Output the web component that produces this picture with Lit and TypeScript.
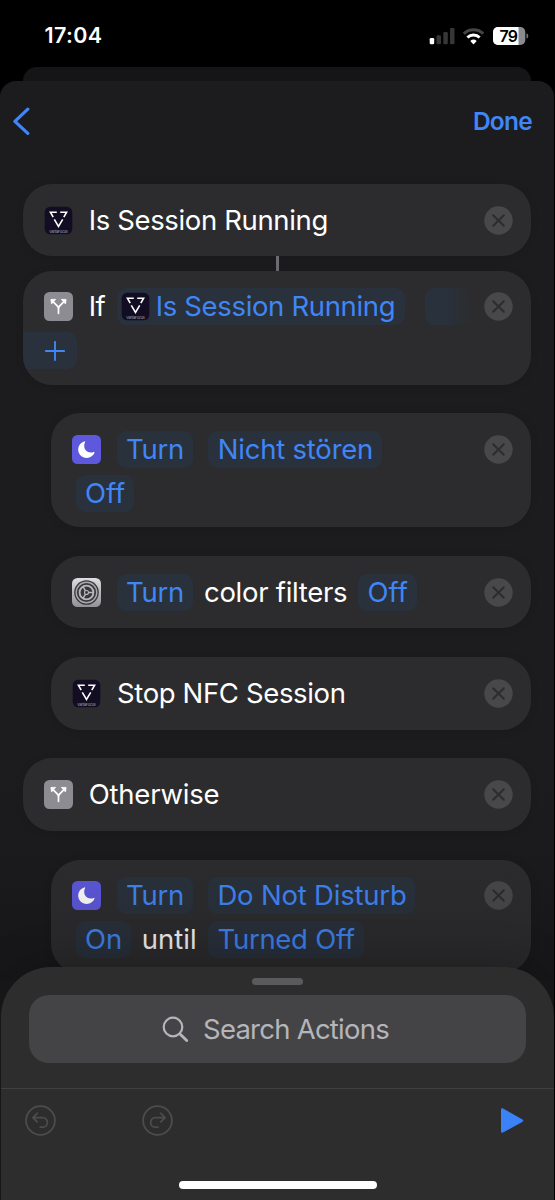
import { LitElement, html, svg, css, nothing } from "lit";
import { customElement, property } from "lit/decorators.js";
import { classMap } from "lit/directives/class-map.js";
import { styleMap } from "lit/directives/style-map.js";

type IconName = "vanta" | "branch" | "moon" | "settings";
type Token = {
  kind: "text" | "chip" | "fade" | "plus";
  text?: string;
  width: number;
  gap?: number;
  icon?: IconName;
  track?: number;
};
type Action = { icon: IconName; nested?: boolean; rows: Token[][]; linked?: boolean };

const spokes = [0, 120, 240];

const icons: Record<IconName, unknown> = {
  vanta: svg`
    <rect x="0.7" y="0.7" width="27.6" height="27.6" rx="5.5" fill="#130d24"/>
    <g fill="none" stroke="#fff" stroke-width="1.6">
      <path d="M12.800 6.200H6.400l2.800 5"/><path d="M16.200 6.200h6.400l-2.800 5"/>
      <path d="M10.300 13.400l4.200 7 4.200-7"/>
    </g>
    <text x="14.5" y="26.600" text-anchor="middle" font-size="3.7" textLength="18.5" letter-spacing="0" fill="#aaa7b4" font-family="Inter, sans-serif">VantaFocus</text>`,
  branch: svg`
    <rect width="29" height="29" rx="5.5" fill="#8d8c92"/>
    <path d="M14.5 21.3v-4.5c0-1.5-.5-2.2-1.5-3.2L9 9.7M14.5 16.8c0-1.5.5-2.2 1.5-3.2l4-3.9" fill="none" stroke="#fff" stroke-width="1.7" stroke-linecap="round"/>
    <path d="M6.9 7.4h4.8l-4.200 4.500zM22.1 7.4h-4.8l4.200 4.500z" fill="#fff" stroke="#fff" stroke-width=".8" stroke-linejoin="round"/>`,
  moon: svg`
    <rect width="29" height="29" rx="5.5" fill="#5d58dc"/>
    <path d="M12.4 6.4C8.500 7.500 6.200 10.900 6.200 14.400c0 4.700 3.700 8.500 8.500 8.500 3.700 0 6.700-2.100 7.800-5.300.2-.6-.2-.9-.7-.7-1 .4-2 .6-3 .6-4 0-6.600-2.800-6.600-6.700 0-1.300.3-2.600.9-3.700.3-.500-.1-.900-.7-.7z" fill="#fff"/>`,
  settings: svg`
    <defs><linearGradient id="metal" x1="0" y1="0" x2="0" y2="1"><stop stop-color="#dedee1"/><stop offset="1" stop-color="#919196"/></linearGradient></defs>
    <rect width="29" height="29" rx="5.500" fill="url(#metal)"/>
    <circle cx="14.500" cy="14.500" r="12.300" fill="#38383a"/>
    <circle cx="14.500" cy="14.500" r="10.300" fill="none" stroke="#a9a9ad" stroke-width="1.400"/>
    <circle cx="14.500" cy="14.500" r="6.900" fill="none" stroke="#b8b8bc" stroke-width="1.900"/>
    <circle cx="14.500" cy="14.500" r="2" fill="none" stroke="#b8b8bc" stroke-width="1.100"/>
    ${spokes.map((a) => svg`<path d="M16.500 14.500h5.500" stroke="#b8b8bc" stroke-width="1.500" transform="rotate(${a} 14.500 14.500)"/>`)}`,
};

const actions: Action[] = [
  { icon: "vanta", linked: true, rows: [[{ kind: "text", text: "Is Session Running", width: 241, track: -0.36 }]] },
  {
    icon: "branch",
    rows: [
      [
        { kind: "text", text: "If", width: 17, track: -0.5 },
        { kind: "chip", text: "Is Session Running", width: 288, gap: 11, icon: "vanta", track: -0.34 },
        { kind: "fade", width: 48, gap: 20 },
      ],
      [{ kind: "plus", width: 54 }],
    ],
  },
  {
    icon: "moon",
    nested: true,
    rows: [
      [
        { kind: "chip", text: "Turn", width: 76, track: -0.3 },
        { kind: "chip", text: "Nicht stören", width: 174, gap: 15.5, track: -0.22 },
      ],
      [{ kind: "chip", text: "Off", width: 58.5 }],
    ],
  },
  {
    icon: "settings",
    nested: true,
    rows: [
      [
        { kind: "chip", text: "Turn", width: 76, track: -0.3 },
        { kind: "text", text: "color filters", width: 143, gap: 11, track: -0.28 },
        { kind: "chip", text: "Off", width: 58.5, gap: 11.5 },
      ],
    ],
  },
  { icon: "vanta", nested: true, rows: [[{ kind: "text", text: "Stop NFC Session", width: 230, track: -0.36 }]] },
  { icon: "branch", rows: [[{ kind: "text", text: "Otherwise", width: 131, track: -0.22 }]] },
  {
    icon: "moon",
    nested: true,
    rows: [
      [
        { kind: "chip", text: "Turn", width: 76, track: -0.3 },
        { kind: "chip", text: "Do Not Disturb", width: 207, gap: 15.5, track: -0.2 },
      ],
      [
        { kind: "chip", text: "On", width: 55.5 },
        { kind: "text", text: "until", width: 55, gap: 10.5 },
        { kind: "chip", text: "Turned Off", width: 155.5, gap: 11.5, track: -0.28 },
      ],
    ],
  },
];

@customElement("action-icon")
export class ActionIcon extends LitElement {
  @property() name: IconName = "vanta";
  static styles = css`
    :host { display: block; flex: none; width: 29px; height: 29px; }
    svg { display: block; }
  `;
  render() {
    return html`<svg width="29" height="29" viewBox="0 0 29 29">${icons[this.name]}</svg>`;
  }
}

@customElement("action-card")
export class ActionCard extends LitElement {
  @property({ attribute: false }) action!: Action;
  static styles = css`
    :host { display: block; }
    .card {
      display: flex; flex-direction: column; gap: 7.2px; box-sizing: border-box;
      min-height: 72.400px; margin-left: 23px; padding: 17.400px 0 15.400px; border-radius: 29px;
      background: #2c2c2e; overflow: hidden; box-shadow: 0 1px 8px #0000001c;
    }
    .card.nested { margin-left: 51.300px; }
    .card.single { padding-top: 18.100px; padding-bottom: 17.500px; }
    .row { display: flex; align-items: center; height: 36.8px; }
    .lead { margin-left: 21.200px; margin-right: 15.500px; }
    .second { padding-left: 24.500px; }
    .second.bleed { padding-left: 0; }
    .token {
      display: flex; align-items: center; flex: none; box-sizing: border-box;
      height: 36.800px; white-space: nowrap; color: #fff;
    }
    .chip, .fade, .plus { background: #29313c; border-radius: 9px; color: #4086f6; }
    .chip { justify-content: center; }
    .chip.with-icon { justify-content: flex-start; padding-left: 4.500px; gap: 5.500px; }
    .fade { background: linear-gradient(90deg, #29313c 45%, #29313c00 95%); }
    .plus { justify-content: center; border-radius: 0 9px 9px 0; padding-left: 9px; }
    .remove { display: block; flex: none; margin-left: auto; margin-right: 18.500px; }
  `;
  private token(t: Token) {
    const style = { width: `${t.width}px`, marginLeft: `${t.gap ?? 0}px`, letterSpacing: `${t.track ?? 0}px` };
    return html`<span class=${classMap({ token: true, [t.kind]: true, "with-icon": !!t.icon })} style=${styleMap(style)}>
      ${t.icon ? html`<action-icon name=${t.icon}></action-icon>` : nothing}${t.text ? html`<span>${t.text}</span>` : nothing}${t.kind === "plus"
        ? html`<svg width="20" height="20" viewBox="0 0 20 20"><path d="M10 .9v18.200M.9 10h18.200" stroke="#4086f6" stroke-width="1.900" stroke-linecap="round"/></svg>`
        : nothing}
    </span>`;
  }
  render() {
    const a = this.action;
    return html`<div class=${classMap({ card: true, nested: !!a.nested, single: a.rows.length === 1 })}>
      <div class="row">
        <action-icon class="lead" name=${a.icon}></action-icon>
        ${a.rows[0].map((t) => this.token(t))}
        <svg class="remove" width="29" height="29" viewBox="0 0 29 29">
          <circle cx="14.500" cy="14.500" r="14.200" fill="#48484b"/>
          <path d="M9.200 9.200l10.600 10.600M19.800 9.200L9.200 19.800" stroke="#2c2c2e" stroke-width="2" stroke-linecap="round"/>
        </svg>
      </div>
      ${a.rows.slice(1).map((r) => html`<div class=${classMap({ row: true, second: true, bleed: r[0].kind === "plus" })}>${r.map((t) => this.token(t))}</div>`)}
    </div>`;
  }
}

@customElement("status-bar")
export class StatusBar extends LitElement {
  static styles = css`
    :host { display: flex; align-items: center; box-sizing: border-box; height: 67px; padding: 4px 26px 0 44.500px; color: #fff; }
    .time { font-size: 21.500px; font-weight: 600; letter-spacing: 0.350px; }
    .glyphs { display: block; margin-left: auto; }
  `;
  render() {
    return html`<span class="time">17:04</span>
      <svg class="glyphs" width="100" height="20" viewBox="429 25 100 20">
        <rect x="429.700" y="37" width="4.500" height="6.300" rx="1.300" fill="#fff"/>
        <g fill="#363638">
          <rect x="436.500" y="34.300" width="4.500" height="9" rx="1.300"/>
          <rect x="443.300" y="31" width="4.500" height="12.300" rx="1.300"/>
          <rect x="450" y="27" width="4.500" height="16.300" rx="1.300"/>
        </g>
        <path d="M463.800 32.700a14 14 0 0 1 19.400 0" fill="none" stroke="#454547" stroke-width="3"/>
        <path d="M467.400 36.500a8.800 8.800 0 0 1 12.200 0" fill="none" stroke="#fff" stroke-width="3"/>
        <path d="M470.300 40.100a4.700 4.700 0 0 1 6.400 0l-3.200 3.300z" fill="#fff"/>
        <clipPath id="cell"><rect x="493" y="26" width="32.300" height="18" rx="5"/></clipPath>
        <g clip-path="url(#cell)">
          <rect x="493" y="26" width="33" height="18" fill="#8b8b8d"/>
          <rect x="493" y="26" width="25.500" height="18" fill="#fff"/>
        </g>
        <path d="M526.500 32.300c2.300.8 2.300 4.600 0 5.400z" fill="#77777a"/>
        <text x="508.700" y="40.800" text-anchor="middle" font-size="16" font-weight="600" fill="#000" font-family="Inter, sans-serif" textLength="18.500">79</text>
      </svg>`;
  }
}

@customElement("action-drawer")
export class ActionDrawer extends LitElement {
  static styles = css`
    :host {
      display: block; box-sizing: border-box; height: 233px; margin: 0 1px;
      border-radius: 50px 50px 0 0; background: #2d2d2e; padding-top: 11px;
      box-shadow: 0 -8px 40px #0000002c;
    }
    .grip { width: 51px; height: 7px; margin: 0 auto; border-radius: 4px; background: #5a5a5c; }
    .search {
      display: flex; align-items: center; box-sizing: border-box; height: 68px;
      margin: 10px 28px 0; padding-left: 133px; gap: 14px; border-radius: 20px;
      background: #444447; color: #b5b5ba; font-size: 27.500px; font-weight: 400; letter-spacing: -0.760px;
    }
    .tools { display: flex; align-items: flex-start; margin-top: 25px; padding: 16px 30px 0 24px; border-top: 1px solid #404042; }
    .redo { margin-left: 85.500px; }
    .play { margin-left: auto; margin-top: 2px; }
    svg { display: block; flex: none; }
    .home { width: 198px; height: 8px; margin: 45px auto 0; border-radius: 4px; background: #fff; }
  `;
  private history(cls: string, flip: boolean) {
    return html`<svg class=${cls} width="31" height="31" viewBox="0 0 31 31">
      <g fill="none" stroke="#4c4c4e" stroke-width="1.800" stroke-linecap="round" stroke-linejoin="round" transform=${flip ? "translate(31 0) scale(-1 1)" : "translate(0 0)"}>
        <circle cx="15.500" cy="15.500" r="14.400"/>
        <path d="M12.200 8.300l-4.300 4.300 4.300 4.300M8.300 12.600h9.200a4.800 4.800 0 0 1 0 9.600h-2.300"/>
      </g></svg>`;
  }
  render() {
    return html`<div class="grip"></div>
      <div class="search">
        <svg width="27" height="27" viewBox="0 0 27 27"><g fill="none" stroke="#b5b5ba" stroke-linecap="round"><circle cx="11" cy="11" r="9.300" stroke-width="2.200"/><path d="M18.200 18.200l6.500 6.300" stroke-width="2.900"/></g></svg>
        <span class="hint">Search Actions</span>
      </div>
      <div class="tools">
        ${this.history("undo", false)}${this.history("redo", true)}
        <svg class="play" width="24" height="27" viewBox="0 0 24 27"><path d="M1.500 2.300v22.400c0 .6.500.9 1 .6L22.600 14.300c.5-.3.500-.9 0-1.200L2.500 1.700c-.5-.3-1 0-1 .6z" fill="#3b82f7" stroke="#3b82f7" stroke-width="1" stroke-linejoin="round"/></svg>
      </div>
      <div class="home"></div>`;
  }
}

@customElement("app-root")
export class AppRoot extends LitElement {
  static styles = css`
    :host {
      display: block; width: 555px; height: 1200px; overflow: hidden; background: #000;
      font-family: Inter, "Liberation Sans", sans-serif; font-size: 27.500px; font-weight: 440; line-height: 1.200; position: relative;
    }
    .behind { height: 14px; margin: 0 24px 0 23px; border-radius: 14px 14px 0 0; background: #151517; }
    .sheet { height: 1119px; margin-right: 1px; border-radius: 16px 16px 0 0; background: linear-gradient(#1c1c1e 700px, #18181a 890px); }
    .nav { display: flex; align-items: center; justify-content: space-between; height: 80px; padding: 0 22px 0 12px; box-sizing: border-box; }
    .back { display: block; }
    .done { color: #4086f6; font-size: 24.500px; font-weight: 600; letter-spacing: -0.750px; padding-top: 2px; }
    .list { display: flex; flex-direction: column; padding: 23px 23px 0 0; }
    .gap { height: 28.900px; }
    .link { width: 3px; height: 14.600px; margin-left: 276px; background: #6c6c70; }
    .veil { position: absolute; left: 0; right: 1px; top: 840px; height: 140px; background: linear-gradient(#10101200, #1010122e); }
    .drawer { position: absolute; left: 0; right: 0; bottom: 0; }
  `;
  render() {
    return html`<status-bar></status-bar>
      <div class="behind"></div>
      <main class="sheet">
        <nav class="nav">
          <svg class="back" width="20" height="29" viewBox="0 0 20 29"><path d="M15.800 2.200L2.900 14.300l12.900 12" fill="none" stroke="#4086f6" stroke-width="3.200" stroke-linecap="round" stroke-linejoin="round"/></svg>
          <span class="done">Done</span>
        </nav>
        <div class="list">
          ${actions.map((a) => html`<action-card .action=${a}></action-card><div class=${a.linked ? "link" : "gap"}></div>`)}
        </div>
      </main>
      <div class="veil"></div>
      <action-drawer class="drawer"></action-drawer>`;
  }
}
